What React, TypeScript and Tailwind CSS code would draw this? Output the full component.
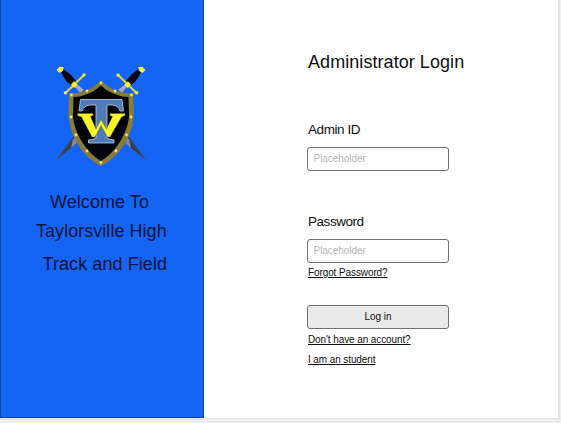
import React from "react";

function Sword() {
  return (
    <g>
      <path d="M73 85 L76 82 L130 138 L146 160 L124 142 Z" fill="#353f58" />
      <path d="M75 87 L77 84 L84 90 L80 93 Z" fill="#9aabc2" />
      <path d="M127 137 L146 160 L125 143 Z" fill="#7f8b9e" />
      <path d="M129 139.5 L146 160 L131 148 Z" fill="#343c50" />
      <path d="M61 72 L64 69.5 L70.5 74.5 L76 81 L72 85.5 L67 82 L63.5 77 Z" fill="#07070c" />
      <path d="M65.5 93 L84.5 74.5" stroke="#dcdb38" strokeWidth="1.9" />
      <path d="M56.5 70 L59.5 66.8 L63.6 67 L63 70.8 L59.5 73 Z" fill="#f2ed45" />
      <path d="M71 84.5 L74 81.2 L77.6 84.7 L74.2 88 Z" fill="#f8f52d" />
      <circle cx="65.5" cy="92.8" r="1.8" fill="#f3ed35" />
      <circle cx="84" cy="75" r="1.7" fill="#f3ed35" />
    </g>
  );
}

const studs = [
  [101, 83], [87, 91], [115, 91], [71.5, 95], [131.5, 95],
  [71, 117], [131, 117], [76, 135], [126.5, 135],
  [87, 151], [116, 151], [101, 162.5],
];

function Crest() {
  return (
    <svg viewBox="54 64 94 104" className="ml-[53px] block h-[104px] w-[94px]" aria-label="Taylorsville crest">
      <Sword />
      <g transform="translate(202 0) scale(-1 1)"><Sword /></g>
      <path
        d="M101 80.5 C96 85 91 89 85 91 Q77 94 69 93 C69 102 67.5 111 69 119 C71 138 83 157 101 166 C119 157 131 138 133.5 119 C134.5 111 133 102 133.5 93 Q125 94 117 91 C111 89 106 85 101 80.5 Z"
        fill="#877c3c"
      />
      <path
        d="M101 85.5 C96 90 91 93 86 94.5 Q80 97 73.5 97 L73 117 C75 134 86 152 101 161 C116 152 127 134 129 117 L128.5 97 Q122 97 116 94.5 C111 93 106 90 101 85.5 Z"
        fill="#020308"
      />
      <path
        d="M80.5 99.5 H122 L123.5 111 H120 Q118.5 105.5 112 105 H107 V138 Q109 139.5 114 140 V143 H88.5 V140 Q94 139.5 96 138 V105 H90 Q84 105.5 82 111 H79 Z"
        fill="#507cbc" stroke="#c0cfdf" strokeWidth="0.8"
      />
      <path
        d="M77.5 113.5 H93 V115.5 L90.5 116.5 L96 129 L101 119.5 L106.5 129 L112.5 116.5 L110 115.5 V113.5 H125 V115.5 L121.5 117 L110 137 H107.5 L101 125.5 L95 137 H92 L81.5 117 L77.5 115.5 Z"
        fill="#f9f52a" stroke="#57532b" strokeWidth="0.4"
      />
      {studs.map(([x, y]) => (
        <circle key={`${x}-${y}`} cx={x} cy={y} r="1.4" fill="#efe864" />
      ))}
    </svg>
  );
}

function Field({ id, type, className }: { id: string; type: string; className: string }) {
  return (
    <input
      id={id}
      type={type}
      placeholder="Placeholder"
      className={`block h-6 w-[142px] rounded-[3px] border border-[#707070] bg-white pb-[2px] pl-[5.5px] text-[10px] tracking-[-0.04px] text-[#222] outline-none placeholder:text-[#b5b5b5] ${className}`}
    />
  );
}

export default function App() {
  return (
    <div className="h-[423px] w-[561px] overflow-hidden bg-[#ededed] font-['Liberation_Sans',Arial,sans-serif] text-[#101010]">
      <div className="flex h-[419px] w-[560px] border-r-2 border-b border-[#e5e5e5] bg-white">
        <aside className="h-[418px] w-[204px] shrink-0 border-x border-b border-[#174296] bg-[#1464f6] pt-16 text-[18px] leading-5 whitespace-nowrap text-[#071438]">
          <Crest />
          <p className="mt-6 ml-[49px] tracking-[0.06px]">Welcome To</p>
          <p className="mt-[9px] ml-[35px] tracking-[0.04px]">Taylorsville High</p>
          <p className="mt-[13px] ml-[41.5px] tracking-[0.08px]">Track and Field</p>
        </aside>
        <main className="pt-[52px] pl-[103px] whitespace-nowrap">
          <h1 className="ml-px text-[18px] leading-5 tracking-[0.06px]">Administrator Login</h1>
          <label htmlFor="admin" className="mt-[50px] ml-px block text-[13.5px] leading-4 tracking-[-0.42px]">Admin ID</label>
          <Field id="admin" type="text" className="mt-[9px]" />
          <label htmlFor="password" className="mt-[43px] ml-px block text-[13.5px] leading-4 tracking-[-0.45px]">Password</label>
          <Field id="password" type="password" className="mt-[9px]" />
          <a href="#forgot" className="mt-1 ml-px block text-[10px] leading-3 tracking-[-0.1px] underline">Forgot Password?</a>
          <button className="mt-[26px] block h-6 w-[142px] rounded-[3px] border border-[#707070] bg-[#eaeaea] pb-[2px] text-[10px]">Log in</button>
          <a href="#account" className="mt-[5px] ml-px block text-[10px] leading-3 tracking-[-0.1px] underline">Don't have an account?</a>
          <a href="#student" className="mt-2 ml-px block text-[10px] leading-3 tracking-[-0.1px] underline">I am an student</a>
        </main>
      </div>
    </div>
  );
}
